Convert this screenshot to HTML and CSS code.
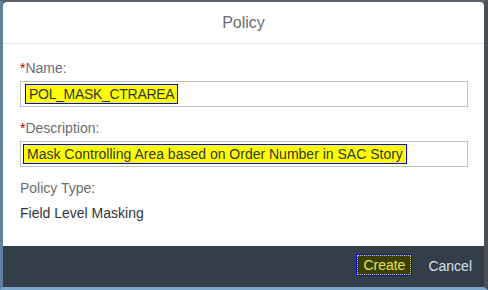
FILE: index.html
```html
<!DOCTYPE html>
<html lang="en">
<head>
  <meta charset="UTF-8" />
  <title>Policy</title>
  <link rel="stylesheet" href="styles.css">
</head>
<body>
  <div class="frame">
    <div class="dialog">
      <div class="dialog-header">Policy</div>
      <div class="dialog-content">
        <label class="field-label"><span class="req">*</span>Name:</label>
        <div class="input"><span class="mark mark-name">POL_MASK_CTRAREA</span></div>

        <label class="field-label"><span class="req">*</span>Description:</label>
        <div class="input"><span class="mark mark-desc">Mask Controlling Area based on Order Number in SAC Story</span></div>

        <div class="field-label type-label">Policy Type:</div>
        <div class="type-value">Field Level Masking</div>
      </div>
      <div class="dialog-footer">
        <button class="btn btn-create"><span>Create</span></button>
        <button class="btn btn-cancel">Cancel</button>
      </div>
    </div>
  </div>
</body>
</html>
```

FILE: styles.css
```css
body {
  margin: 0;
  padding: 0;
  font-family: "Liberation Sans", Arial, sans-serif;
  font-size: 14px;
  background: #4a4f55;
}
.frame {
  width: 488px;
  height: 290px;
  box-sizing: border-box;
  border-top: 2px solid #5a636c;
  border-left: 3px solid #5f7f9f;
  border-right: 4px solid #4b4e52;
  border-bottom: 3px solid #7fa6cc;
}
.dialog {
  height: 100%;
  display: flex;
  flex-direction: column;
  background: #fff;
  border-radius: 4px 4px 0 0;
  overflow: hidden;
}
.dialog-header {
  height: 41px;
  line-height: 41px;
  text-align: center;
  font-size: 16px;
  color: #6a6d70;
  border-bottom: 1px solid #e5e5e5;
  flex-shrink: 0;
}
.dialog-content {
  flex: 1;
  padding: 16px 16px 0 17px;
}
.field-label {
  display: block;
  height: 17px;
  line-height: 17px;
  color: #6a6d70;
  margin-bottom: 4px;
}
.req {
  color: #bb0000;
}
.input {
  height: 26px;
  box-sizing: border-box;
  border: 1px solid #bfbfbf;
  display: flex;
  align-items: center;
  padding-left: 4px;
  margin-bottom: 13px;
}
.mark {
  background: #ffff00;
  border: 1px solid #0000ff;
  color: #32363a;
  line-height: 18px;
  padding: 0 3px;
}
.mark-name {
  letter-spacing: -0.3px;
}
.mark-desc {
  margin-left: -2px;
}
.type-label {
  margin-bottom: 8px;
}
.type-value {
  color: #32363a;
  line-height: 17px;
}
.dialog-footer {
  height: 41px;
  flex-shrink: 0;
  background: #333e48;
  display: flex;
  align-items: center;
  justify-content: flex-end;
  padding-right: 6px;
  gap: 8px;
}
.btn {
  font-family: inherit;
  font-size: 14px;
  border: none;
  background: none;
  cursor: pointer;
  height: 22px;
  padding: 0 6px;
}
.btn-create {
  background: #3a3f00;
  border: 1px solid #0000ff;
  color: #e2e84a;
  padding: 1px;
  margin-bottom: 3px;
}
.btn-create span {
  display: block;
  height: 18px;
  line-height: 18px;
  padding: 0 5px;
  outline: 1px dotted #d8de3a;
}
.btn-cancel {
  color: #d1e2f2;
  margin-left: 2px;
  margin-bottom: 2px;
}
```
